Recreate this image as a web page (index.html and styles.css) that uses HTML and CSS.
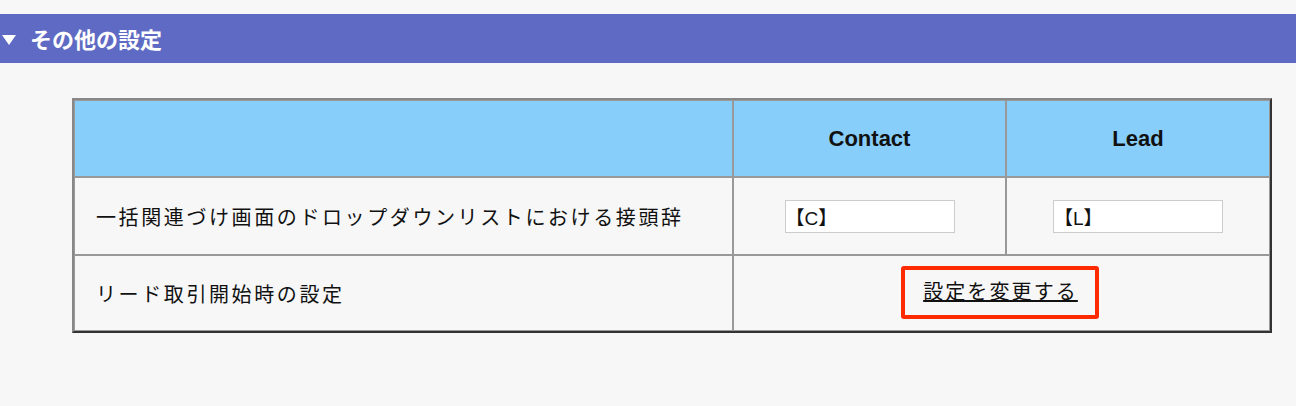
FILE: index.html
```html
<!DOCTYPE html>
<html lang="ja">

<head>
    <meta charset="UTF-8">
    <meta name="viewport" content="width=device-width, initial-scale=1.0">
    <title>その他の設定</title>

    <!-- CSS styling -->
    <link rel="stylesheet" href="styles.css">
</head>

<body>
    <!-- Section header -->
    <div class="section-header">
        <span class="toggle"></span>
        <h2>その他の設定</h2>
    </div>

    <!-- Settings table -->
    <div class="section-body">
        <table class="settings">
            <tr>
                <th class="label-col"></th>
                <th class="value-col">Contact</th>
                <th class="lead-col">Lead</th>
            </tr>
            <tr>
                <td class="label">一括関連づけ画面のドロップダウンリストにおける接頭辞</td>
                <td class="value"><input type="text" value="【C】"></td>
                <td class="value"><input type="text" value="【L】"></td>
            </tr>
            <tr class="last-row">
                <td class="label">リード取引開始時の設定</td>
                <td class="value action" colspan="2">
                    <span class="highlight"><a href="#">設定を変更する</a></span>
                </td>
            </tr>
        </table>
    </div>
</body>

</html>
```

FILE: styles.css
```css
/* General body styles */
body {
    font-family: "Liberation Sans", "Noto Sans CJK JP", sans-serif;
    margin: 0;
    padding: 14px 0 0;
    background-color: #f7f7f7;
    color: #111;
}

/* Section header bar */
.section-header {
    display: flex;
    align-items: center;
    height: 49px;
    background-color: #5e6ac3;
    color: white;
}

.toggle {
    width: 0;
    height: 0;
    margin: 2px 14px 0 2px;
    border-left: 7px solid transparent;
    border-right: 7px solid transparent;
    border-top: 10px solid white;
}

.section-header h2 {
    margin: 0 0 2px;
    font-size: 22px;
    font-weight: bold;
}

/* Table container */
.section-body {
    padding: 35px 0 0 72px;
}

/* Settings table */
.settings {
    width: 1200px;
    table-layout: fixed;
    border-collapse: separate;
    border-spacing: 0;
    border: 2px solid;
    border-color: #888 #333 #333 #888;
}

.settings th,
.settings td {
    border: 1px solid #999;
    padding: 0;
}

.settings th {
    height: 75px;
    background-color: #87cefa;
    font-size: 22px;
    font-weight: bold;
    text-align: center;
}

.label-col {
    width: 657px;
}

.value-col {
    width: 271px;
}

.settings td {
    height: 76px;
}

.settings .last-row td {
    height: 74px;
}

.label {
    padding-left: 21px !important;
    font-size: 20px;
    letter-spacing: 2.6px;
}

.value {
    text-align: center;
}

/* Prefix inputs */
.value input {
    box-sizing: border-box;
    width: 170px;
    height: 33px;
    margin: 0;
    padding: 0;
    border: 1px solid #ccc;
    background-color: white;
    font-family: "Liberation Sans", "Noto Sans CJK JP", sans-serif;
    font-size: 19px;
    color: #111;
}

.action {
    line-height: 0;
}

/* Red annotation box around the link */
.highlight {
    display: inline-block;
    vertical-align: middle;
    padding: 6px 17px 5px 18px;
    border: 4px solid #ff2a00;
    border-radius: 3px;
    margin: 0 0 2px -3px;
    line-height: 32px;
}

.highlight a {
    color: #111;
    font-size: 20px;
    letter-spacing: 2.1px;
}
```
